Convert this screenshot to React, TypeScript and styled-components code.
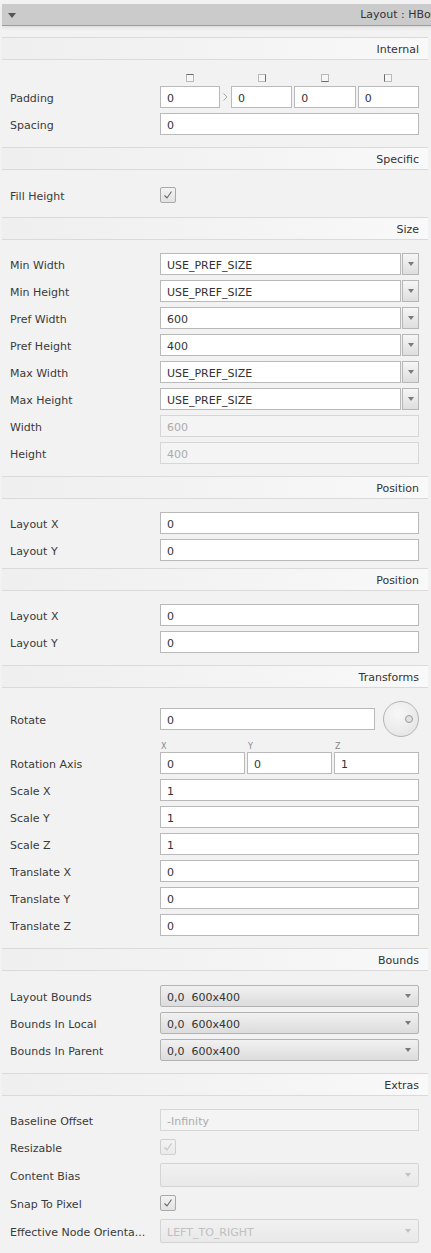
import React from "react";
import styled, { createGlobalStyle } from "styled-components";

const Global = createGlobalStyle`
  html, body { margin: 0; padding: 0; background: #f2f2f2; }
  body {
    font-family: "DejaVu Sans", "Liberation Sans", sans-serif;
    font-size: 11px;
    color: #333;
    overflow: hidden;
  }
`;

const Panel = styled.div`
  width: 431px;
  overflow: hidden;
  padding-top: 4px;
  padding-bottom: 1px;
`;

const TitleBar = styled.div`
  height: 21px;
  margin-left: 2px;
  margin-right: -20px;
  background: #cbcbcb;
  border-bottom: 1px solid #9c9c9c;
  box-shadow: 0 2px 3px rgba(0, 0, 0, 0.07);
  display: flex;
  align-items: center;
  justify-content: space-between;
  padding: 0 14px 0 6px;
  font-size: 11px;
  color: #333;
`;

const TitleArrow = styled.span`
  width: 0;
  height: 0;
  border-left: 4px solid transparent;
  border-right: 4px solid transparent;
  border-top: 5px solid #555;
  margin-top: 1px;
`;

const Section = styled.section<{ $mt?: number }>`
  margin-top: ${(p) => p.$mt ?? 0}px;
`;

const SectionHeader = styled.div`
  margin: 0 3px 0 2px;
  height: 21px;
  box-sizing: content-box;
  border-top: 1px solid #dadada;
  border-bottom: 1px solid #dadada;
  background: linear-gradient(to right, #efefef 0%, #f2f2f2 35%, #f6f6f6 75%, #f9f9f9 100%);
  display: flex;
  align-items: center;
  justify-content: flex-end;
  padding-right: 9px;
  color: #333;
  & > span {
    padding-top: 2px;
  }
`;

const Grid = styled.div<{ $pt: number; $pb: number }>`
  display: grid;
  grid-template-columns: 150px 259px;
  row-gap: 5px;
  padding: ${(p) => p.$pt}px 0 ${(p) => p.$pb}px 10px;
`;

const Label = styled.div<{ $end?: boolean }>`
  display: flex;
  align-items: center;
  height: 22px;
  box-sizing: border-box;
  padding-top: 2px;
  align-self: ${(p) => (p.$end ? "end" : "center")};
  color: #3a3a3a;
  white-space: nowrap;
`;

const Field = styled.div<{ $disabled?: boolean }>`
  height: 22px;
  box-sizing: border-box;
  border: 1px solid ${(p) => (p.$disabled ? "#d6d6d6" : "#b9b9b9")};
  background: ${(p) => (p.$disabled ? "#f4f4f4" : "#ffffff")};
  color: ${(p) => (p.$disabled ? "#ababab" : "#333")};
  padding: 2px 6px 0;
  display: flex;
  align-items: center;
  min-width: 0;
  white-space: nowrap;
  overflow: hidden;
`;

const ComboRow = styled.div`
  display: flex;
  gap: 1px;
`;

const ComboField = styled(Field)`
  flex: 1;
`;

const ArrowButton = styled.div`
  width: 17px;
  height: 22px;
  box-sizing: border-box;
  border: 1px solid #b6b6b6;
  background: linear-gradient(to bottom, #f6f6f6, #dedede);
  display: flex;
  align-items: center;
  justify-content: center;
`;

const Arrow = styled.span<{ $light?: boolean }>`
  width: 0;
  height: 0;
  border-left: 3.5px solid transparent;
  border-right: 3.5px solid transparent;
  border-top: 4px solid ${(p) => (p.$light ? "#c2c2c2" : "#7a7a7a")};
`;

const Select = styled.div<{ $disabled?: boolean; $h?: number }>`
  height: ${(p) => p.$h ?? 22}px;
  box-sizing: border-box;
  border: 1px solid ${(p) => (p.$disabled ? "#d4d4d4" : "#b3b3b3")};
  border-radius: 2px;
  background: ${(p) =>
    p.$disabled
      ? "linear-gradient(to bottom, #f1f1f1, #e9e9e9)"
      : "linear-gradient(to bottom, #f1f1f1, #dcdcdc)"};
  color: ${(p) => (p.$disabled ? "#c0c0c0" : "#333")};
  display: flex;
  align-items: center;
  justify-content: space-between;
  padding: 0 7px 0 6px;
  white-space: pre;
  & > span:first-child {
    padding-top: 2px;
  }
`;

const CheckRow = styled.div`
  height: 22px;
  display: flex;
  align-items: center;
`;

const CheckBox = styled.div<{ $disabled?: boolean }>`
  width: 16px;
  height: 16px;
  box-sizing: border-box;
  border: 1px solid ${(p) => (p.$disabled ? "#cfcfcf" : "#a9a9a9")};
  border-radius: 2px;
  background: ${(p) =>
    p.$disabled
      ? "linear-gradient(to bottom, #f2f2f2, #ebebeb)"
      : "linear-gradient(to bottom, #f3f3f3, #e2e2e2)"};
  display: flex;
  align-items: center;
  justify-content: center;
`;

const PaddingGroup = styled.div`
  display: grid;
  grid-template-columns: 60px 7px 1fr 1fr 1fr;
  grid-template-rows: 7px 22px;
  column-gap: 2px;
  row-gap: 5px;
`;

const SideIconCell = styled.div`
  display: flex;
  justify-content: center;
  align-items: center;
`;

const Chevron = styled.div`
  display: flex;
  align-items: center;
  justify-content: center;
`;

const RotateRow = styled.div`
  display: flex;
  align-items: center;
  gap: 8px;
  height: 36px;
`;

const RotateField = styled(Field)`
  flex: 1;
`;

const Dial = styled.div`
  width: 36px;
  height: 36px;
  box-sizing: border-box;
  border-radius: 50%;
  border: 1px solid #b3b3b3;
  background: radial-gradient(circle at 40% 35%, #f7f7f7 0%, #ececec 55%, #dedede 100%);
  display: flex;
  align-items: center;
  justify-content: flex-end;
  padding-right: 5px;
`;

const Knob = styled.div`
  width: 8px;
  height: 8px;
  box-sizing: border-box;
  border-radius: 50%;
  border: 1px solid #9a9a9a;
  background: #e2e2e2;
`;

const AxisGroup = styled.div`
  display: grid;
  grid-template-columns: 1fr 1fr 1fr;
  grid-template-rows: 10px 22px;
  column-gap: 2px;
`;

const AxisLabel = styled.div`
  font-size: 8px;
  color: #888;
  line-height: 10px;
  padding-left: 1px;
`;

type Side = "top" | "right" | "bottom" | "left";

const SideIcon: React.FC<{ side: Side }> = ({ side }) => {
  const lines: Record<Side, [number, number, number, number]> = {
    top: [0.5, 0.5, 7.5, 0.5],
    right: [7.5, 0.5, 7.5, 7.5],
    bottom: [0.5, 7.5, 7.5, 7.5],
    left: [0.5, 0.5, 0.5, 7.5],
  };
  const l = lines[side];
  return (
    <svg width="8" height="8" viewBox="0 0 8 8">
      <rect x="0.5" y="0.5" width="7" height="7" fill="#f6f6f6" stroke="#b9b9b9" strokeWidth="1" />
      <line x1={l[0]} y1={l[1]} x2={l[2]} y2={l[3]} stroke="#6a6a6a" strokeWidth="1" />
    </svg>
  );
};

const Check: React.FC<{ light?: boolean }> = ({ light }) => (
  <svg width="10" height="10" viewBox="0 0 10 10">
    <polyline
      points="1.5,5.5 4,8 8.5,1.5"
      fill="none"
      stroke={light ? "#c4c4c4" : "#666"}
      strokeWidth="1.1"
    />
  </svg>
);

const Header: React.FC<{ title: string }> = ({ title }) => (
  <SectionHeader>
    <span>{title}</span>
  </SectionHeader>
);

const TextRow: React.FC<{ label: string; value: string; disabled?: boolean }> = ({ label, value, disabled }) => (
  <>
    <Label>{label}</Label>
    <Field $disabled={disabled}>{value}</Field>
  </>
);

const ComboInput: React.FC<{ label: string; value: string }> = ({ label, value }) => (
  <>
    <Label>{label}</Label>
    <ComboRow>
      <ComboField>{value}</ComboField>
      <ArrowButton>
        <Arrow />
      </ArrowButton>
    </ComboRow>
  </>
);

const SelectRow: React.FC<{ label: string; value: string; disabled?: boolean; h?: number }> = ({
  label,
  value,
  disabled,
  h,
}) => (
  <>
    <Label>{label}</Label>
    <Select $disabled={disabled} $h={h}>
      <span>{value}</span>
      <Arrow $light={disabled} />
    </Select>
  </>
);

const CheckLine: React.FC<{ label: string; disabled?: boolean }> = ({ label, disabled }) => (
  <>
    <Label>{label}</Label>
    <CheckRow>
      <CheckBox $disabled={disabled}>
        <Check light={disabled} />
      </CheckBox>
    </CheckRow>
  </>
);

export default function App() {
  return (
    <Panel>
      <Global />
      <TitleBar>
        <TitleArrow />
        <span>Layout : HBox</span>
      </TitleBar>

      <Section $mt={11}>
        <Header title="Internal" />
        <Grid $pt={14} $pb={12}>
          <Label $end>Padding</Label>
          <PaddingGroup>
            <SideIconCell><SideIcon side="top" /></SideIconCell>
            <div />
            <SideIconCell><SideIcon side="right" /></SideIconCell>
            <SideIconCell><SideIcon side="bottom" /></SideIconCell>
            <SideIconCell><SideIcon side="left" /></SideIconCell>
            <Field>0</Field>
            <Chevron>
              <svg width="5" height="8" viewBox="0 0 5 8">
                <polyline points="0.5,0.5 4,4 0.5,7.5" fill="none" stroke="#a8a8a8" strokeWidth="1" />
              </svg>
            </Chevron>
            <Field>0</Field>
            <Field>0</Field>
            <Field>0</Field>
          </PaddingGroup>
          <TextRow label="Spacing" value="0" />
        </Grid>
      </Section>

      <Section>
        <Header title="Specific" />
        <Grid $pt={14} $pb={11}>
          <CheckLine label="Fill Height" />
        </Grid>
      </Section>

      <Section>
        <Header title="Size" />
        <Grid $pt={13} $pb={12}>
          <ComboInput label="Min Width" value="USE_PREF_SIZE" />
          <ComboInput label="Min Height" value="USE_PREF_SIZE" />
          <ComboInput label="Pref Width" value="600" />
          <ComboInput label="Pref Height" value="400" />
          <ComboInput label="Max Width" value="USE_PREF_SIZE" />
          <ComboInput label="Max Height" value="USE_PREF_SIZE" />
          <TextRow label="Width" value="600" disabled />
          <TextRow label="Height" value="400" disabled />
        </Grid>
      </Section>

      <Section>
        <Header title="Position" />
        <Grid $pt={13} $pb={7}>
          <TextRow label="Layout X" value="0" />
          <TextRow label="Layout Y" value="0" />
        </Grid>
      </Section>

      <Section>
        <Header title="Position" />
        <Grid $pt={13} $pb={12}>
          <TextRow label="Layout X" value="0" />
          <TextRow label="Layout Y" value="0" />
        </Grid>
      </Section>

      <Section>
        <Header title="Transforms" />
        <Grid $pt={13} $pb={12}>
          <Label>Rotate</Label>
          <RotateRow>
            <RotateField>0</RotateField>
            <Dial>
              <Knob />
            </Dial>
          </RotateRow>
          <Label $end>Rotation Axis</Label>
          <AxisGroup>
            <AxisLabel>X</AxisLabel>
            <AxisLabel>Y</AxisLabel>
            <AxisLabel>Z</AxisLabel>
            <Field>0</Field>
            <Field>0</Field>
            <Field>1</Field>
          </AxisGroup>
          <TextRow label="Scale X" value="1" />
          <TextRow label="Scale Y" value="1" />
          <TextRow label="Scale Z" value="1" />
          <TextRow label="Translate X" value="0" />
          <TextRow label="Translate Y" value="0" />
          <TextRow label="Translate Z" value="0" />
        </Grid>
      </Section>

      <Section>
        <Header title="Bounds" />
        <Grid $pt={14} $pb={12}>
          <SelectRow label="Layout Bounds" value="0,0  600x400" />
          <SelectRow label="Bounds In Local" value="0,0  600x400" />
          <SelectRow label="Bounds In Parent" value="0,0  600x400" />
        </Grid>
      </Section>

      <Section>
        <Header title="Extras" />
        <Grid $pt={13} $pb={10}>
          <TextRow label="Baseline Offset" value="-Infinity" disabled />
          <CheckLine label="Resizable" disabled />
          <SelectRow label="Content Bias" value="" disabled h={24} />
          <CheckLine label="Snap To Pixel" />
          <SelectRow label="Effective Node Orienta..." value="LEFT_TO_RIGHT" disabled h={24} />
        </Grid>
      </Section>
    </Panel>
  );
}
